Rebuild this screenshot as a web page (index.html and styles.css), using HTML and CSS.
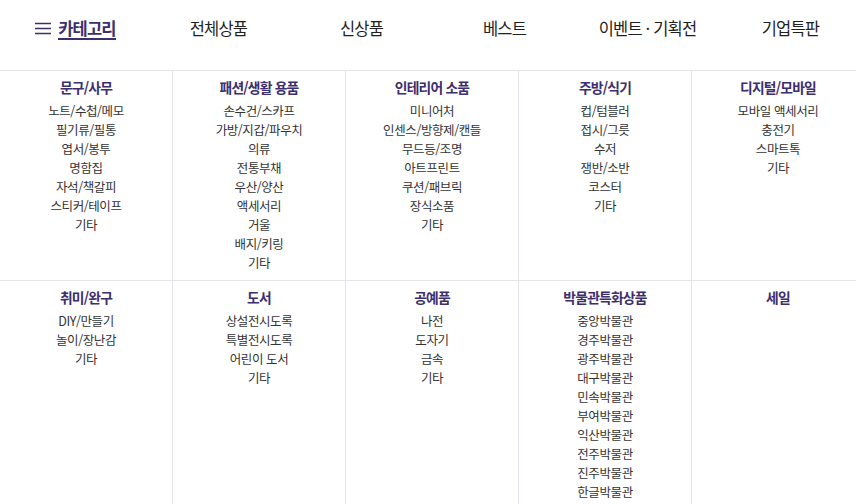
FILE: index.html
```html
<!DOCTYPE html>
<html lang="ko">
<head>
<meta charset="utf-8">
<link rel="stylesheet" href="styles.css">
</head>
<body>
<div class="page">
  <nav class="gnb">
    <a class="gnb-item gnb-cat">
      <svg class="burger" width="16" height="13" viewBox="0 0 16 13"><path d="M0 1.5H16M0 6.5H16M0 11.5H16" stroke="#3d2e6e" stroke-width="1.5" fill="none"/></svg>
      <span class="cat-label">카테고리</span>
    </a>
    <a class="gnb-item">전체상품</a>
    <a class="gnb-item">신상품</a>
    <a class="gnb-item">베스트</a>
    <a class="gnb-item">이벤트 · 기획전</a>
    <a class="gnb-item">기업특판</a>
  </nav>
  <div class="panel">
    <div class="cell"><h3>문구/사무</h3><ul><li>노트/수첩/메모</li><li>필기류/필통</li><li>엽서/봉투</li><li>명함집</li><li>자석/책갈피</li><li>스티커/테이프</li><li>기타</li></ul></div>
    <div class="cell"><h3>패션/생활 용품</h3><ul><li>손수건/스카프</li><li>가방/지갑/파우치</li><li>의류</li><li>전통부채</li><li>우산/양산</li><li>액세서리</li><li>거울</li><li>배지/키링</li><li>기타</li></ul></div>
    <div class="cell"><h3>인테리어 소품</h3><ul><li>미니어처</li><li>인센스/방향제/캔들</li><li>무드등/조명</li><li>아트프린트</li><li>쿠션/패브릭</li><li>장식소품</li><li>기타</li></ul></div>
    <div class="cell"><h3>주방/식기</h3><ul><li>컵/텀블러</li><li>접시/그릇</li><li>수저</li><li>쟁반/소반</li><li>코스터</li><li>기타</li></ul></div>
    <div class="cell"><h3>디지털/모바일</h3><ul><li>모바일 액세서리</li><li>충전기</li><li>스마트톡</li><li>기타</li></ul></div>
    <div class="cell"><h3>취미/완구</h3><ul><li>DIY/만들기</li><li>놀이/장난감</li><li>기타</li></ul></div>
    <div class="cell"><h3>도서</h3><ul><li>상설전시도록</li><li>특별전시도록</li><li>어린이 도서</li><li>기타</li></ul></div>
    <div class="cell"><h3>공예품</h3><ul><li>나전</li><li>도자기</li><li>금속</li><li>기타</li></ul></div>
    <div class="cell"><h3>박물관특화상품</h3><ul><li>중앙박물관</li><li>경주박물관</li><li>광주박물관</li><li>대구박물관</li><li>민속박물관</li><li>부여박물관</li><li>익산박물관</li><li>전주박물관</li><li>진주박물관</li><li>한글박물관</li></ul></div>
    <div class="cell"><h3>세일</h3><ul></ul></div>
  </div>
</div>
</body>
</html>
```

FILE: styles.css
```css
* { box-sizing: border-box; }
html, body { margin: 0; padding: 0; }
body {
  width: 856px;
  height: 504px;
  overflow: hidden;
  background: #ffffff;
  font-family: "Noto Sans CJK KR", "Noto Sans", sans-serif;
  color: #333333;
}
.page { width: 865px; }
.gnb {
  display: grid;
  grid-template-columns: repeat(6, 143px);
  padding-left: 4px;
  height: 71px;
  border-bottom: 1px solid #e6e3ea;
  align-items: start;
}
.gnb-item {
  display: flex;
  justify-content: center;
  align-items: center;
  height: 56px;
  font-size: 16.5px;
  font-weight: 400;
  letter-spacing: -0.8px;
  color: #1f1f1f;
  text-decoration: none;
}
.gnb-cat { gap: 7px; }
.burger { display: block; margin-top: 1px; }
.cat-label {
  color: #3d2e6e;
  font-weight: 700;
  border-bottom: 2px solid #3d2e6e;
  line-height: 20px;
  margin-top: 1px;
}
.panel {
  display: grid;
  grid-template-columns: repeat(5, 173px);
}
.cell {
  border-right: 1px solid #e6e3ea;
  text-align: center;
  padding-top: 6px;
  padding-bottom: 8px;
}
.cell:nth-child(-n+5) { border-bottom: 1px solid #e6e3ea; }
.cell h3 {
  margin: 0 0 3px 0;
  font-size: 13.8px;
  line-height: 21px;
  font-weight: 700;
  letter-spacing: -0.8px;
  color: #3d2e6e;
}
.cell ul { list-style: none; margin: 0; padding: 0; }
.cell li {
  font-size: 12.5px;
  line-height: 19px;
  letter-spacing: -0.4px;
  color: #333333;
}
```
